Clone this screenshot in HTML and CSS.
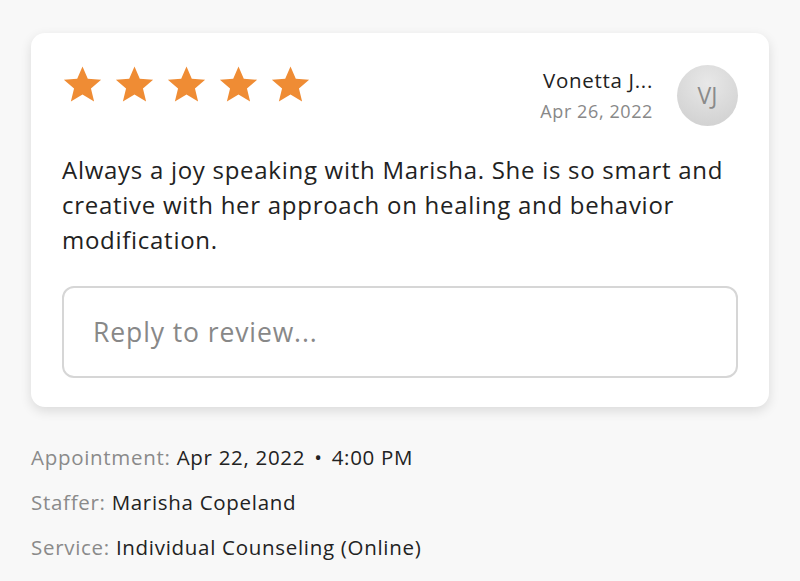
FILE: index.html
```html
<!DOCTYPE html>
<html>
<head>
<meta charset="utf-8">
<link rel="stylesheet" href="styles.css">
</head>
<body>
<div class="page">
  <div class="card">
    <div class="card-head">
      <div class="stars">
        <svg class="star" viewBox="0 0 24 24"><path d="M12 1.4l3.1 7.2 7.8.6-5.95 5.1 1.85 7.65L12 17.9 5.2 21.95l1.85-7.65L1.1 9.2l7.8-.6z"/></svg>
        <svg class="star" viewBox="0 0 24 24"><path d="M12 1.4l3.1 7.2 7.8.6-5.95 5.1 1.85 7.65L12 17.9 5.2 21.95l1.85-7.65L1.1 9.2l7.8-.6z"/></svg>
        <svg class="star" viewBox="0 0 24 24"><path d="M12 1.4l3.1 7.2 7.8.6-5.95 5.1 1.85 7.65L12 17.9 5.2 21.95l1.85-7.65L1.1 9.2l7.8-.6z"/></svg>
        <svg class="star" viewBox="0 0 24 24"><path d="M12 1.4l3.1 7.2 7.8.6-5.95 5.1 1.85 7.65L12 17.9 5.2 21.95l1.85-7.65L1.1 9.2l7.8-.6z"/></svg>
        <svg class="star" viewBox="0 0 24 24"><path d="M12 1.4l3.1 7.2 7.8.6-5.95 5.1 1.85 7.65L12 17.9 5.2 21.95l1.85-7.65L1.1 9.2l7.8-.6z"/></svg>
      </div>
      <div class="author">
        <div class="author-text">
          <div class="author-name">Vonetta J...</div>
          <div class="author-date">Apr 26, 2022</div>
        </div>
        <div class="avatar">VJ</div>
      </div>
    </div>
    <p class="review">Always a joy speaking with Marisha. She is so smart and creative with her approach on healing and behavior modification.</p>
    <div class="reply">Reply to review...</div>
  </div>
  <div class="details">
    <div class="row"><span class="label">Appointment:</span> <span class="value">Apr 22, 2022<span class="dot">•</span>4:00 PM</span></div>
    <div class="row"><span class="label">Staffer:</span> <span class="value">Marisha Copeland</span></div>
    <div class="row"><span class="label">Service:</span> <span class="value">Individual Counseling (Online)</span></div>
  </div>
</div>
</body>
</html>
```
FILE: styles.css
```css
html, body {
  margin: 0;
  padding: 0;
  background: #f8f8f8;
  font-family: "Open Sans", "Lato", sans-serif;
  color: #222;
}
.page {
  padding: 33px 31px 0 31px;
  width: 738px;
}
.card {
  background: #fff;
  border-radius: 14px;
  box-shadow: 0 4px 12px rgba(0,0,0,0.12);
  padding: 30px 31px 30px 31px;
  height: 314px;
}
.card-head {
  display: flex;
  justify-content: space-between;
  align-items: flex-start;
}
.stars {
  display: flex;
  gap: 11px;
  padding-top: 1px;
}
.star {
  width: 41px;
  height: 41px;
  fill: #ef8c34;
}
.author {
  display: flex;
  align-items: center;
  gap: 24px;
  margin-top: 1px;
}
.author-text {
  text-align: right;
}
.author-name {
  font-size: 20.5px;
  letter-spacing: 0.7px;
  line-height: 32px;
  color: #222;
}
.author-date {
  font-size: 18px;
  letter-spacing: 0.6px;
  line-height: 30px;
  color: #888;
}
.avatar {
  width: 61px;
  height: 61px;
  border-radius: 50%;
  background: radial-gradient(circle at 50% 30%, #e8e8e8, #cdcdcd);
  color: #8a8a8a;
  font-size: 23px;
  display: flex;
  align-items: center;
  justify-content: center;
}
.review {
  margin: 26px 0 0 0;
  font-size: 24px;
  letter-spacing: 0.72px;
  line-height: 35px;
  color: #222;
}
.reply {
  margin-top: 29px;
  height: 88px;
  border: 2px solid #d6d6d6;
  border-radius: 12px;
  display: flex;
  align-items: center;
  padding-left: 29px;
  font-size: 26.5px;
  letter-spacing: 0.9px;
  color: #888;
}
.details {
  padding-top: 28px;
}
.row {
  font-size: 20.5px;
  letter-spacing: 0.7px;
  line-height: 45px;
}
.label {
  color: #8a8a8a;
}
.value {
  color: #222;
}
.dot {
  margin: 0 9px;
}
```
